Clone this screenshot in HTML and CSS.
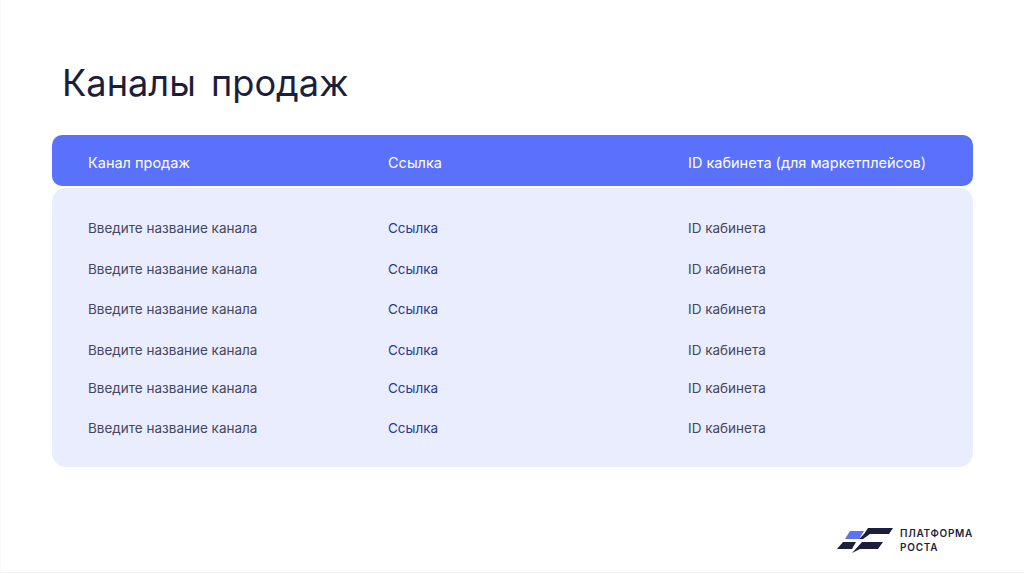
FILE: index.html
```html
<!DOCTYPE html>
<html lang="ru">
<head>
<meta charset="utf-8">
<title>Каналы продаж</title>
<link rel="stylesheet" href="styles.css">
</head>
<body>
<div class="slide">
  <h1 class="title">Каналы продаж</h1>
  <div class="thead">
    <div class="cell">Канал продаж</div>
    <div class="cell">Ссылка</div>
    <div class="cell">ID кабинета (для маркетплейсов)</div>
  </div>
  <div class="tbody">
    <div class="cell">Введите название канала</div><div class="cell link">Ссылка</div><div class="cell">ID кабинета</div>
    <div class="cell">Введите название канала</div><div class="cell link">Ссылка</div><div class="cell">ID кабинета</div>
    <div class="cell">Введите название канала</div><div class="cell link">Ссылка</div><div class="cell">ID кабинета</div>
    <div class="cell">Введите название канала</div><div class="cell link">Ссылка</div><div class="cell">ID кабинета</div>
    <div class="cell">Введите название канала</div><div class="cell link">Ссылка</div><div class="cell">ID кабинета</div>
    <div class="cell">Введите название канала</div><div class="cell link">Ссылка</div><div class="cell">ID кабинета</div>
  </div>
  <div class="footer">
    <div class="brand">
      <svg class="logo" width="56" height="25" viewBox="0 0 56 25">
        <path class="logo-blue" d="M13 3H27L22 11H8Z"/>
        <path class="logo-dark" d="M31 0H56L52 6H33L26 11H22L27 6Z"/>
        <path class="logo-dark" d="M6 14H19L15 21H0Z"/>
        <path class="logo-dark" d="M25 14H46L41 21H23L15 25Z"/>
      </svg>
      <div class="brand-name">ПЛАТФОРМА<br>РОСТА</div>
    </div>
  </div>
</div>
</body>
</html>
```
FILE: styles.css
```css
* { box-sizing: border-box; }
html, body { margin: 0; padding: 0; background: #fff; }
body { width: 1024px; height: 574px; overflow: hidden; font-family: "Inter", "Noto Sans", sans-serif; }
.slide {
  width: 1024px;
  height: 573px;
  padding: 0 51px 0 51px;
  border-left: 1px solid #fafafa;
  border-bottom: 1px solid #f2f2f2;
  display: flex;
  flex-direction: column;
}
.title {
  margin: 0 0 0 10px;
  padding-top: 57px;
  height: 135px;
  font-size: 36.2px;
  line-height: 52px;
  font-weight: 400;
  word-spacing: 5px;
  color: #1b1f3b;
}
.thead, .tbody {
  display: grid;
  grid-template-columns: 300px 300px 1fr;
  padding-left: 36px;
  width: 921px;
}
.thead {
  height: 51px;
  align-items: center;
  padding-top: 3px;
  background: #5a71fb;
  border-radius: 10px;
  color: #fff;
  font-size: 14.5px;
}
.tbody {
  margin-top: 2px;
  height: 279px;
  padding-top: 30px;
  background: #e9edfd;
  border-radius: 14px;
  font-size: 13.5px;
  line-height: 20px;
  font-weight: 400;
  color: #45475f;
  grid-template-rows: 41px 40px 41px 38px 40px 20px;
  align-content: start;
  align-items: start;
}
.link { color: #2b3a8c; }
.footer {
  flex: 1;
  display: flex;
  justify-content: flex-end;
  align-items: flex-start;
  padding: 59px 0 0 0;
}
.brand { display: flex; align-items: center; gap: 7px; }
.logo-blue { fill: #5a71fb; }
.logo-dark { fill: #1b1f3b; }
.brand-name {
  font-size: 10px;
  line-height: 14px;
  font-weight: 600;
  color: #1b1f3b;
  letter-spacing: 0.7px;
}
```
